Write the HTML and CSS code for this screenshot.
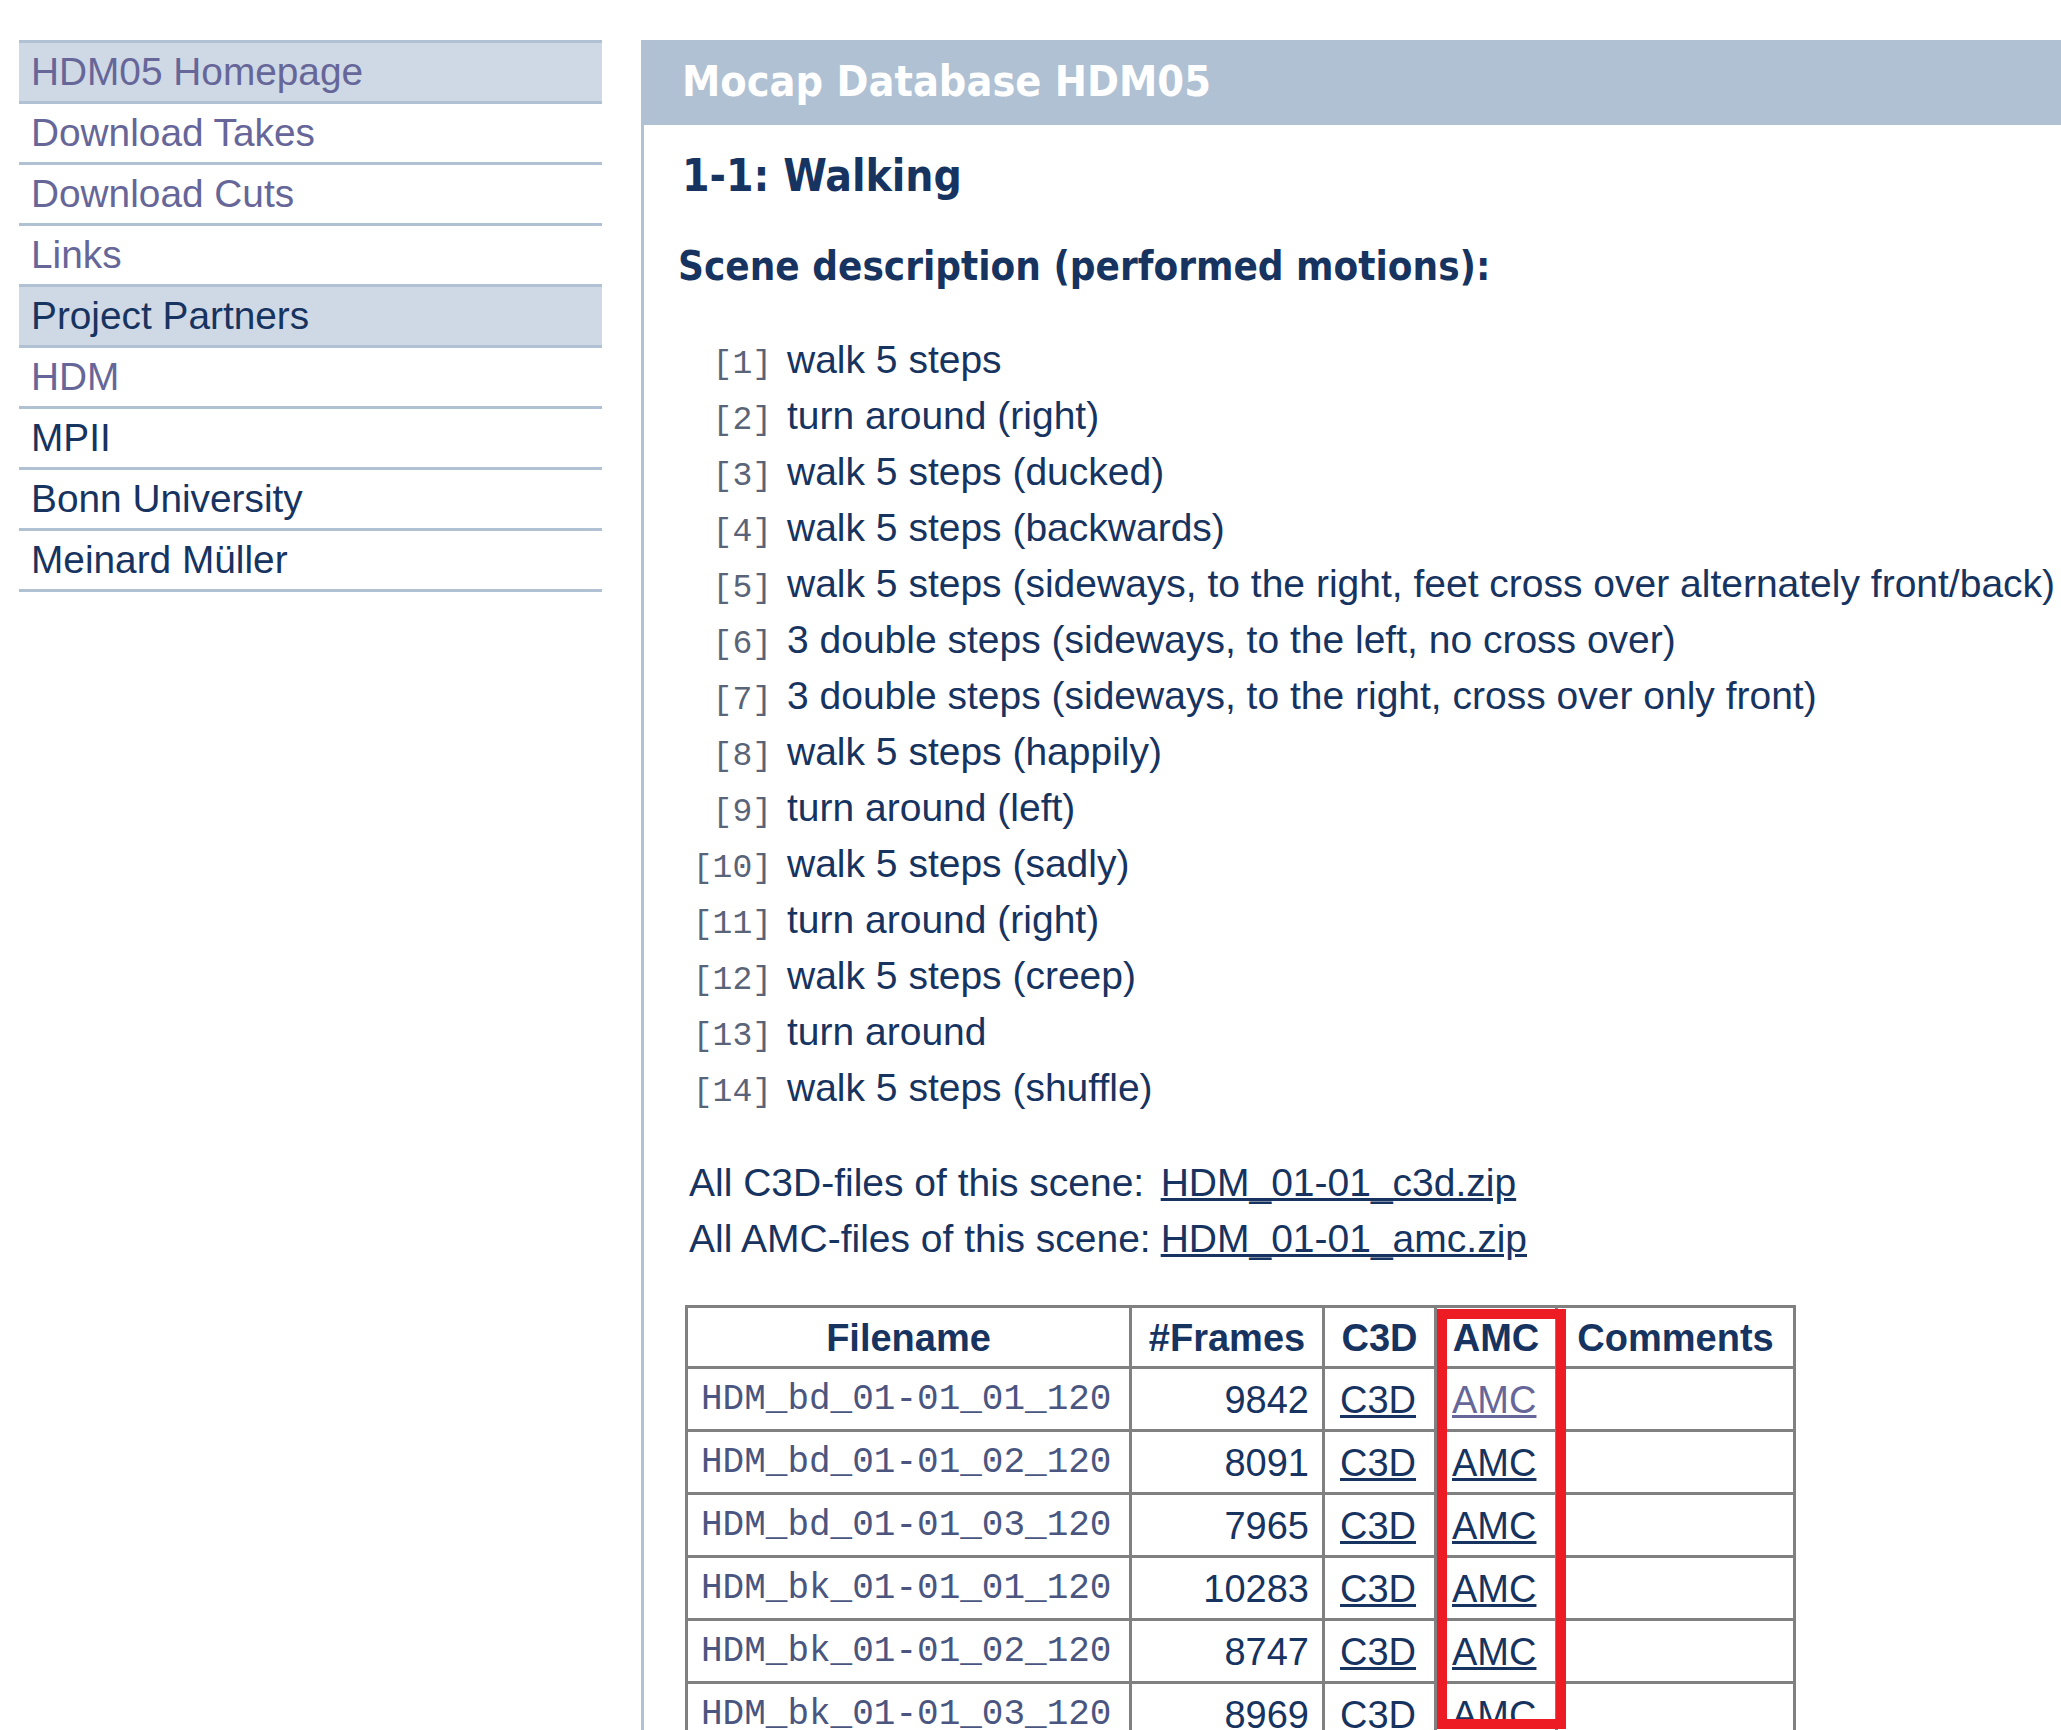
FILE: index.html
```html
<!DOCTYPE html>
<html lang="en">
<head>
<meta charset="utf-8">
<title>Mocap Database HDM05 - 1-1: Walking</title>
<link rel="stylesheet" href="styles.css">
</head>
<body>
<div class="page">
  <nav class="sidebar">
    <a class="item hl muted" href="#">HDM05 Homepage</a>
    <a class="item muted" href="#">Download Takes</a>
    <a class="item muted" href="#">Download Cuts</a>
    <a class="item muted" href="#">Links</a>
    <div class="item hl">Project Partners</div>
    <a class="item muted" href="#">HDM</a>
    <a class="item" href="#">MPII</a>
    <a class="item" href="#">Bonn University</a>
    <a class="item" href="#">Meinard Müller</a>
  </nav>
  <main class="content">
    <header class="banner">Mocap Database HDM05</header>
    <div class="inner">
      <h1 class="scene-title">1-1: Walking</h1>
      <h2 class="section-title">Scene description (performed motions):</h2>
      <ul class="motions">
        <li><span class="num">[1]</span><span>walk 5 steps</span></li>
        <li><span class="num">[2]</span><span>turn around (right)</span></li>
        <li><span class="num">[3]</span><span>walk 5 steps (ducked)</span></li>
        <li><span class="num">[4]</span><span>walk 5 steps (backwards)</span></li>
        <li><span class="num">[5]</span><span>walk 5 steps (sideways, to the right, feet cross over alternately front/back)</span></li>
        <li><span class="num">[6]</span><span>3 double steps (sideways, to the left, no cross over)</span></li>
        <li><span class="num">[7]</span><span>3 double steps (sideways, to the right, cross over only front)</span></li>
        <li><span class="num">[8]</span><span>walk 5 steps (happily)</span></li>
        <li><span class="num">[9]</span><span>turn around (left)</span></li>
        <li><span class="num">[10]</span><span>walk 5 steps (sadly)</span></li>
        <li><span class="num">[11]</span><span>turn around (right)</span></li>
        <li><span class="num">[12]</span><span>walk 5 steps (creep)</span></li>
        <li><span class="num">[13]</span><span>turn around</span></li>
        <li><span class="num">[14]</span><span>walk 5 steps (shuffle)</span></li>
      </ul>
      <div class="downloads">
        <span>All C3D-files of this scene:</span><a href="#">HDM_01-01_c3d.zip</a>
        <span>All AMC-files of this scene:</span><a href="#">HDM_01-01_amc.zip</a>
      </div>
      <div class="table-wrap">
        <table class="files">
          <colgroup>
            <col class="c-name"><col class="c-frames"><col class="c-c3d"><col class="c-amc"><col class="c-comments">
          </colgroup>
          <thead>
            <tr><th>Filename</th><th>#Frames</th><th>C3D</th><th>AMC</th><th>Comments</th></tr>
          </thead>
          <tbody>
            <tr><td class="fname">HDM_bd_01-01_01_120</td><td class="frames">9842</td><td class="link"><a href="#">C3D</a></td><td class="link"><a class="visited" href="#">AMC</a></td><td></td></tr>
            <tr><td class="fname">HDM_bd_01-01_02_120</td><td class="frames">8091</td><td class="link"><a href="#">C3D</a></td><td class="link"><a href="#">AMC</a></td><td></td></tr>
            <tr><td class="fname">HDM_bd_01-01_03_120</td><td class="frames">7965</td><td class="link"><a href="#">C3D</a></td><td class="link"><a href="#">AMC</a></td><td></td></tr>
            <tr><td class="fname">HDM_bk_01-01_01_120</td><td class="frames">10283</td><td class="link"><a href="#">C3D</a></td><td class="link"><a href="#">AMC</a></td><td></td></tr>
            <tr><td class="fname">HDM_bk_01-01_02_120</td><td class="frames">8747</td><td class="link"><a href="#">C3D</a></td><td class="link"><a href="#">AMC</a></td><td></td></tr>
            <tr><td class="fname">HDM_bk_01-01_03_120</td><td class="frames">8969</td><td class="link"><a href="#">C3D</a></td><td class="link"><a href="#">AMC</a></td><td></td></tr>
          </tbody>
        </table>
        <div class="highlight"></div>
      </div>
    </div>
  </main>
</div>
</body>
</html>
```

FILE: styles.css
```css
html, body {
  margin: 0;
  padding: 0;
  background: #ffffff;
}

body {
  font-family: "Liberation Sans", Arial, sans-serif;
  color: #17335f;
  overflow: hidden;
}

.page {
  display: flex;
  align-items: flex-start;
  gap: 39px;
  padding: 40px 0 0 19px;
  min-height: 1690px;
}

/* ---------- sidebar ---------- */
.sidebar {
  width: 583px;
  flex: none;
  display: flex;
  flex-direction: column;
  border-top: 3px solid #b0c1d4;
}

.item {
  display: block;
  height: 58px;
  line-height: 58px;
  padding-left: 12px;
  font-size: 38.8px;
  color: #17335f;
  text-decoration: none;
  border-bottom: 3px solid #b0c1d4;
  white-space: nowrap;
}

.item.hl {
  background: #cfd9e5;
}

.item.muted {
  color: #666699;
}

/* ---------- main ---------- */
.content {
  flex: 1;
  min-width: 0;
  border-left: 3px solid #b0c1d4;
  min-height: 1700px;
}

.banner {
  height: 85px;
  line-height: 83px;
  background: #b0c1d4;
  color: #ffffff;
  padding-left: 38px;
  font-family: "DejaVu Sans Condensed", "DejaVu Sans", sans-serif;
  font-stretch: condensed;
  font-weight: bold;
  font-size: 42.8px;
  white-space: nowrap;
}

.inner {
  padding-left: 38px;
}

.scene-title {
  margin: 26px 0 0 0;
  font-family: "DejaVu Sans Condensed", "DejaVu Sans", sans-serif;
  font-stretch: condensed;
  font-weight: bold;
  font-size: 44px;
  line-height: 50px;
  color: #17335f;
}

.section-title {
  margin: 42px 0 0 -4px;
  font-family: "DejaVu Sans Condensed", "DejaVu Sans", sans-serif;
  font-stretch: condensed;
  font-weight: bold;
  font-size: 40px;
  line-height: 47px;
  color: #17335f;
}

.motions {
  list-style: none;
  margin: 42px 0 0 0;
  padding: 0;
}

.motions li {
  display: flex;
  align-items: baseline;
  gap: 15px;
  height: 56px;
  font-size: 39px;
  line-height: 56px;
  white-space: nowrap;
}

.motions .num {
  width: 90px;
  flex: none;
  text-align: right;
  font-family: "Liberation Mono", "Courier New", monospace;
  font-size: 33px;
  line-height: 1;
  color: #5a6478;
}

.downloads {
  display: grid;
  grid-template-columns: max-content max-content;
  column-gap: 10px;
  margin: 39px 0 0 7px;
  font-size: 39px;
  line-height: 56px;
}

.downloads a,
.files a {
  color: #17335f;
  text-decoration: underline;
}

/* ---------- table ---------- */
.table-wrap {
  position: relative;
  margin: 38px 0 0 3px;
  width: 1108px;
}

.files {
  border-collapse: collapse;
  table-layout: fixed;
  width: 1108px;
  font-size: 38px;
  border: 3px solid #808080;
}

.c-name { width: 444px; }
.c-frames { width: 193px; }
.c-c3d { width: 112px; }
.c-amc { width: 121px; }
.c-comments { width: 238px; }

.files th,
.files td {
  border: 3px solid #808080;
  padding: 0 13px;
  white-space: nowrap;
  overflow: hidden;
}

.files th {
  padding-top: 3px;
  line-height: 55px;
  font-weight: bold;
  text-align: center;
  color: #17335f;
}

.files td {
  padding-top: 2px;
  line-height: 58px;
  color: #17335f;
}

.files td.fname {
  font-family: "Liberation Mono", "Courier New", monospace;
  font-size: 36px;
  color: #4a5680;
  padding-left: 13px;
}

.files td.frames {
  text-align: right;
}

.files td.link {
  padding-left: 15px;
}

.files a.visited {
  color: #666699;
}

.highlight {
  position: absolute;
  left: 752px;
  top: 4px;
  width: 109px;
  height: 400px;
  border: 10px solid #ed1c24;
  pointer-events: none;
}
```
